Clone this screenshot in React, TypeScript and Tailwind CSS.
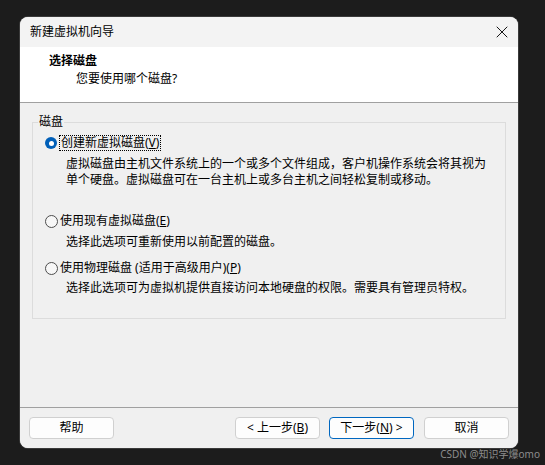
import { X } from 'lucide-react';

const font = "font-['Noto_Sans','Noto_Sans_CJK_SC',sans-serif]";

function Radio({ checked }: { checked?: boolean }) {
  return checked ? (
    <span className="flex h-[12px] w-[12px] items-center justify-center rounded-full bg-[#005fb8]">
      <span className="h-[5px] w-[5px] rounded-full bg-white" />
    </span>
  ) : (
    <span className="h-[13px] w-[13px] rounded-full border border-[#4d4d4d] bg-[#f7f7f7]" />
  );
}

function Btn({ children, primary }: { children: React.ReactNode; primary?: boolean }) {
  return (
    <button
      className={`flex h-[22px] w-[85px] items-center justify-center rounded-[4px] border bg-[#fdfdfd] text-[12px] leading-[16px] text-black ${
        primary ? 'border-[#0067c0]' : 'border-[#d0d0d0]'
      }`}
    >
      {children}
    </button>
  );
}

export default function App() {
  return (
    <div className={`relative h-[465px] w-[545px] bg-[#1c1c1c] pl-[20px] pt-[17px] ${font}`}>
      <div className="flex h-[431px] w-[498px] flex-col overflow-hidden rounded-[8px] bg-[#f0f0f0] ring-1 ring-[#3a3a3a]">
        {/* title bar */}
        <div className="flex h-[30px] items-center justify-between bg-[#f3f3f3] pb-[1px] pl-[10px] pr-[6px]">
          <span className="text-[12px] leading-[16px] text-black">新建虚拟机向导</span>
          <X className="h-[20px] w-[20px] text-black" strokeWidth={1.1} />
        </div>

        {/* header */}
        <div className="h-[56px] border-b border-[#a0a0a0] bg-white pt-[6px] text-[12px] leading-[16px] text-black">
          <div className="pl-[29px] font-bold">选择磁盘</div>
          <div className="mt-[2px] pl-[56px]">您要使用哪个磁盘?</div>
        </div>

        {/* body */}
        <div className="h-[305px] border-b border-[#a0a0a0] bg-[#f0f0f0] pt-[19px] text-[12px] leading-[16px] text-black">
          <div className="relative mx-[12px] h-[197px] border border-[#dcdcdc] px-[12px] pt-[12px]">
            <span className="absolute left-[5px] top-[-9px] bg-[#f0f0f0] px-[1px]">磁盘</span>

            <div className="flex items-center gap-[2px]">
              <Radio checked />
              <span className="border border-dotted border-black px-[1px] leading-[14px]">
                创建新虚拟磁盘(<span className="underline">V</span>)
              </span>
            </div>
            <div className="mt-[5px] pl-[21px]">
              虚拟磁盘由主机文件系统上的一个或多个文件组成，客户机操作系统会将其视为
              <br />
              单个硬盘。虚拟磁盘可在一台主机上或多台主机之间轻松复制或移动。
            </div>

            <div className="mt-[25px] flex items-center gap-[2px]">
              <Radio />
              <span>
                使用现有虚拟磁盘(<span className="underline">E</span>)
              </span>
            </div>
            <div className="mt-[5px] pl-[21px]">选择此选项可重新使用以前配置的磁盘。</div>

            <div className="mt-[10px] flex items-center gap-[2px]">
              <Radio />
              <span>
                使用物理磁盘 (适用于高级用户)(<span className="underline">P</span>)
              </span>
            </div>
            <div className="mt-[4px] pl-[21px]">
              选择此选项可为虚拟机提供直接访问本地硬盘的权限。需要具有管理员特权。
            </div>
          </div>
        </div>

        {/* footer */}
        <div className="flex flex-1 items-start bg-[#f0f0f0] pl-[9px] pr-[9px] pt-[9px]">
          <Btn>帮助</Btn>
          <div className="ml-auto flex gap-[9px]">
            <Btn>&lt; 上一步(<span className="underline">B</span>)</Btn>
            <Btn primary>
              下一步(<span className="underline">N</span>) &gt;
            </Btn>
          </div>
          <div className="ml-[10px]">
            <Btn>取消</Btn>
          </div>
        </div>
      </div>

      <div className="absolute bottom-[4px] right-[5px] text-[10px] leading-[13px] text-[#8c8c8c]">
        CSDN @知识学爆omo
      </div>
    </div>
  );
}
